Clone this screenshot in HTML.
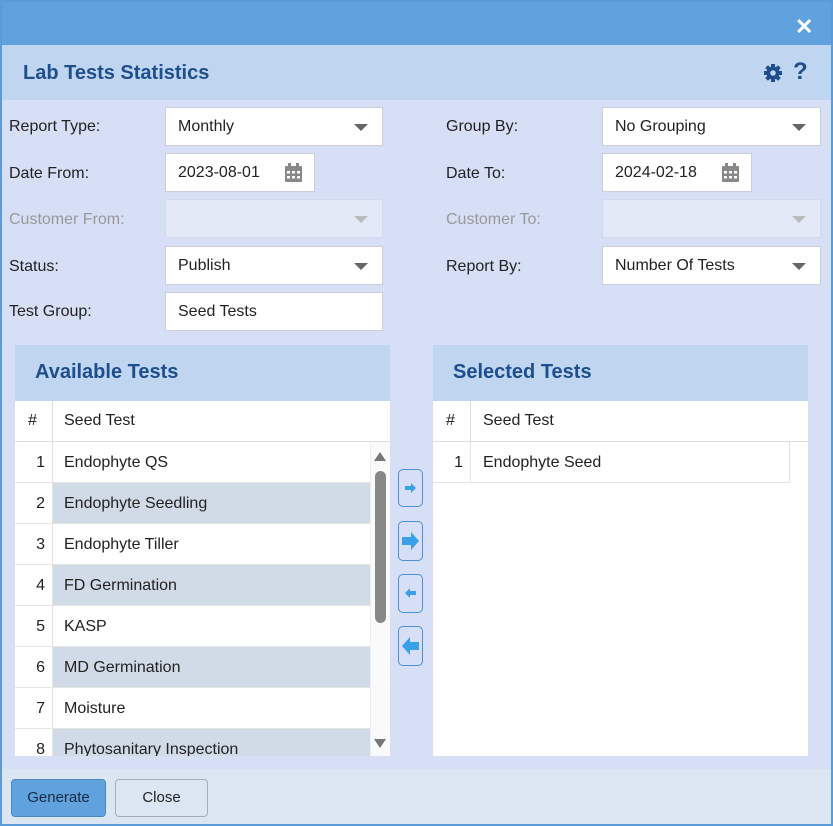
<!DOCTYPE html>
<html><head><style>
*{box-sizing:border-box;margin:0;padding:0}
body{width:833px;height:826px;overflow:hidden;font-family:"Liberation Sans",sans-serif;font-size:16px;color:#222;background:#5b9bd8;position:relative}
.abs{position:absolute}
.win{left:2px;top:2px;width:829px;height:822px;background:#d6dff5}
.title{left:2px;top:2px;width:829px;height:43px;background:#5fa2dd}
.hdr{left:2px;top:45px;width:829px;height:55px;background:#bfd5f0}
.h1{left:23px;top:62px;font-size:20px;font-weight:bold;color:#1f4e8c}
.lbl{font-size:16px;color:#222}
.dis{color:#999}
.inp{background:#fff;border:1px solid #ccd;height:39px;padding:0 12px;line-height:37px;font-size:16px}
.inp.d{background:#e3e9f7;border-color:#d0d8ea}
.tri{position:absolute;right:14px;top:16px;width:0;height:0;border-left:7px solid transparent;border-right:7px solid transparent;border-top:7px solid #666}
.d .tri{border-top-color:#bbb}
.panel{background:#fff}
.ph{background:#bfd5f0;height:56px;font-size:20px;font-weight:bold;color:#1f4e8c;padding:16px 20px}
.ch{height:41px;border-bottom:1px solid #ddd;position:relative;font-size:16px}
.row{position:absolute;height:41px;border-bottom:1px solid #e4e4e4;font-size:16px}
.num{position:absolute;left:0;width:37px;text-align:right;padding-right:7px;top:12px}
.nm{position:absolute;left:49px;top:12px}
.ab{position:absolute;left:398px;width:25px;border:1px solid #4a90d9;border-radius:5px;background:#d6dff5}
.btn{position:absolute;top:779px;height:38px;border-radius:4px;font-size:15px;text-align:center;line-height:36px}
</style></head><body>
<div class="abs win"></div>
<div class="abs title"></div>
<div class="abs" style="left:795px;top:14px;color:#fff;font-size:22px;font-weight:bold">✕</div>
<div class="abs hdr"></div>
<div class="abs h1">Lab Tests Statistics</div>
<svg class="abs" style="left:763px;top:63px" width="20" height="20" viewBox="0 0 20 20"><g fill="#1f4e8c"><circle cx="10" cy="10" r="6.5"/><rect x="8" y="1" width="4" height="18"/><rect x="1" y="8" width="18" height="4"/><rect x="8" y="1" width="4" height="18" transform="rotate(45 10 10)"/><rect x="8" y="1" width="4" height="18" transform="rotate(-45 10 10)"/></g><circle cx="10" cy="10" r="2.8" fill="#bfd5f0"/></svg>
<div class="abs" style="left:793px;top:58px;font-size:24px;font-weight:bold;color:#1f4e8c">?</div>

<div class="abs lbl" style="left:9px;top:118px">Report Type:</div>
<div class="abs inp" style="left:165px;top:107px;width:218px">Monthly<span class="tri"></span></div>
<div class="abs lbl" style="left:446px;top:118px">Group By:</div>
<div class="abs inp" style="left:602px;top:107px;width:219px">No Grouping<span class="tri"></span></div>

<div class="abs lbl" style="left:9px;top:165px">Date From:</div>
<div class="abs inp" style="left:165px;top:153px;width:150px">2023-08-01</div>
<svg class="abs" style="left:285px;top:163px" width="17" height="19" viewBox="0 0 17 19"><rect x="0" y="3" width="17" height="16" rx="1" fill="#888"/><rect x="3" y="0" width="3" height="5" fill="#888"/><rect x="11" y="0" width="3" height="5" fill="#888"/><g fill="#fff"><rect x="2" y="8" width="3" height="2.5"/><rect x="7" y="8" width="3" height="2.5"/><rect x="12" y="8" width="3" height="2.5"/><rect x="2" y="13" width="3" height="2.5"/><rect x="7" y="13" width="3" height="2.5"/><rect x="12" y="13" width="3" height="2.5"/></g></svg>
<div class="abs lbl" style="left:446px;top:165px">Date To:</div>
<div class="abs inp" style="left:602px;top:153px;width:150px">2024-02-18</div>
<svg class="abs" style="left:722px;top:163px" width="17" height="19" viewBox="0 0 17 19"><rect x="0" y="3" width="17" height="16" rx="1" fill="#888"/><rect x="3" y="0" width="3" height="5" fill="#888"/><rect x="11" y="0" width="3" height="5" fill="#888"/><g fill="#fff"><rect x="2" y="8" width="3" height="2.5"/><rect x="7" y="8" width="3" height="2.5"/><rect x="12" y="8" width="3" height="2.5"/><rect x="2" y="13" width="3" height="2.5"/><rect x="7" y="13" width="3" height="2.5"/><rect x="12" y="13" width="3" height="2.5"/></g></svg>

<div class="abs lbl dis" style="left:9px;top:211px">Customer From:</div>
<div class="abs inp d" style="left:165px;top:199px;width:218px"><span class="tri"></span></div>
<div class="abs lbl dis" style="left:446px;top:211px">Customer To:</div>
<div class="abs inp d" style="left:602px;top:199px;width:219px"><span class="tri"></span></div>

<div class="abs lbl" style="left:9px;top:258px">Status:</div>
<div class="abs inp" style="left:165px;top:246px;width:218px">Publish<span class="tri"></span></div>
<div class="abs lbl" style="left:446px;top:258px">Report By:</div>
<div class="abs inp" style="left:602px;top:246px;width:219px">Number Of Tests<span class="tri"></span></div>

<div class="abs lbl" style="left:9px;top:303px">Test Group:</div>
<div class="abs inp" style="left:165px;top:292px;width:218px">Seed Tests</div>

<div class="abs panel" style="left:15px;top:345px;width:375px;height:411px;overflow:hidden">
<div class="ph">Available Tests</div>
<div class="ch"><span class="abs" style="left:13px;top:11px">#</span><span class="abs" style="left:37px;top:0;height:41px;border-left:1px solid #ddd"></span><span class="abs" style="left:49px;top:11px">Seed Test</span></div>
<div class="abs" style="left:37px;top:97px;width:1px;height:320px;background:#e4e4e4"></div>
<div class="row" style="top:97px;left:0;width:355px"><span class="num">1</span><span class="nm">Endophyte QS</span></div>
<div class="row" style="top:138px;left:0;width:355px"><span class="num">2</span><span class="abs" style="left:38px;top:0;width:317px;height:40px;background:#d1dbe7"></span><span class="nm">Endophyte Seedling</span></div>
<div class="row" style="top:179px;left:0;width:355px"><span class="num">3</span><span class="nm">Endophyte Tiller</span></div>
<div class="row" style="top:220px;left:0;width:355px"><span class="num">4</span><span class="abs" style="left:38px;top:0;width:317px;height:40px;background:#d1dbe7"></span><span class="nm">FD Germination</span></div>
<div class="row" style="top:261px;left:0;width:355px"><span class="num">5</span><span class="nm">KASP</span></div>
<div class="row" style="top:302px;left:0;width:355px"><span class="num">6</span><span class="abs" style="left:38px;top:0;width:317px;height:40px;background:#d1dbe7"></span><span class="nm">MD Germination</span></div>
<div class="row" style="top:343px;left:0;width:355px"><span class="num">7</span><span class="nm">Moisture</span></div>
<div class="row" style="top:384px;left:0;width:355px"><span class="num">8</span><span class="abs" style="left:38px;top:0;width:317px;height:40px;background:#d1dbe7"></span><span class="nm">Phytosanitary Inspection</span></div>
<div class="abs" style="left:355px;top:97px;width:20px;height:314px;background:#fafafa;border-left:1px solid #eee"></div>
<div class="abs" style="left:359px;top:107px;border-left:6px solid transparent;border-right:6px solid transparent;border-bottom:9px solid #777"></div>
<div class="abs" style="left:360px;top:126px;width:11px;height:152px;border-radius:6px;background:#888"></div>
<div class="abs" style="left:359px;top:394px;border-left:6px solid transparent;border-right:6px solid transparent;border-top:9px solid #777"></div>
</div>

<div class="ab" style="top:469px;height:38px"><svg width="23" height="36"><path d="M6 16h6v-3l5 5-5 5v-3H6z" fill="#3aa0e8"/></svg></div>
<div class="ab" style="top:521px;height:40px"><svg width="23" height="38"><path d="M3 15h9v-5l8 9-8 9v-5H3z" fill="#3aa0e8"/></svg></div>
<div class="ab" style="top:574px;height:39px"><svg width="23" height="37"><path d="M17 16h-6v-3l-5 5 5 5v-3h6z" fill="#3aa0e8"/></svg></div>
<div class="ab" style="top:626px;height:40px"><svg width="23" height="38"><path d="M20 15h-9v-5l-8 9 8 9v-5h9z" fill="#3aa0e8"/></svg></div>

<div class="abs panel" style="left:433px;top:345px;width:375px;height:411px">
<div class="ph">Selected Tests</div>
<div class="ch"><span class="abs" style="left:13px;top:11px">#</span><span class="abs" style="left:37px;top:0;height:41px;border-left:1px solid #ddd"></span><span class="abs" style="left:50px;top:11px">Seed Test</span></div>
<div class="row" style="top:97px;left:0;width:357px;border-right:1px solid #e4e4e4"><span class="num">1</span><span class="abs" style="left:37px;top:0;height:41px;border-left:1px solid #e4e4e4"></span><span class="nm" style="left:50px">Endophyte Seed</span></div>
</div>

<div class="abs" style="left:2px;top:769px;width:829px;height:55px;background:#dce6f3"></div>
<div class="btn" style="left:11px;width:95px;background:#5fa2dd;border:1px solid #4a88c8;color:#1a2a44">Generate</div>
<div class="btn" style="left:115px;width:93px;background:#dce6f3;border:1px solid #aab">Close</div>
</body></html>
